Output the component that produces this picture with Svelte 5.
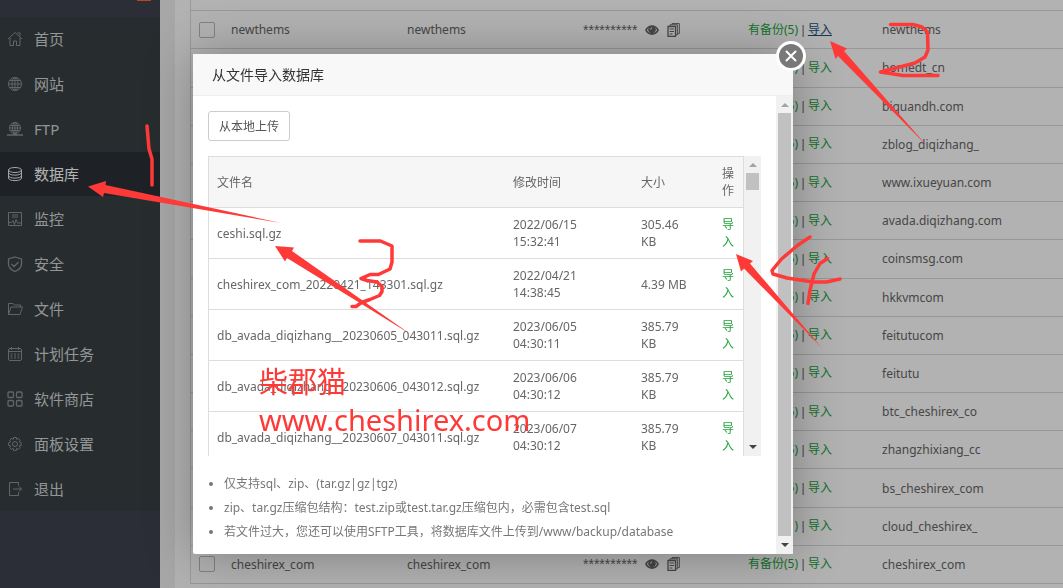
<script>
  const menu = [
    { label: '首页', icon: 'home' },
    { label: '网站', icon: 'globe' },
    { label: 'FTP', icon: 'ftp' },
    { label: '数据库', icon: 'db', active: true },
    { label: '监控', icon: 'monitor' },
    { label: '安全', icon: 'shield' },
    { label: '文件', icon: 'folder' },
    { label: '计划任务', icon: 'calendar' },
    { label: '软件商店', icon: 'apps' },
    { label: '面板设置', icon: 'gear' },
    { label: '退出', icon: 'exit' }
  ];

  const databases = [
    { name: '', note: '' },
    { name: 'newthems', note: 'newthems', hover: true },
    { name: 'homedt_cn', note: 'homedt_cn' },
    { name: 'biquandh_com', note: 'biquandh.com' },
    { name: 'zblog_diqizhang_', note: 'zblog_diqizhang_' },
    { name: 'ixueyuan', note: 'www.ixueyuan.com' },
    { name: 'avada', note: 'avada.diqizhang.com' },
    { name: 'coinsmsg', note: 'coinsmsg.com' },
    { name: 'hkkvmcom', note: 'hkkvmcom' },
    { name: 'feitutucom', note: 'feitutucom' },
    { name: 'feitutu', note: 'feitutu' },
    { name: 'btc_cheshirex_co', note: 'btc_cheshirex_co' },
    { name: 'zhangzhixiang_cc', note: 'zhangzhixiang_cc' },
    { name: 'bs_cheshirex_com', note: 'bs_cheshirex_com' },
    { name: 'cloud_cheshirex_', note: 'cloud_cheshirex_', backups: 1 },
    { name: 'cheshirex_com', note: 'cheshirex_com' }
  ];

  const files = [
    { name: 'ceshi.sql.gz', day: '2022/06/15', time: '15:32:41', size: '305.46 KB' },
    { name: 'cheshirex_com_20220421_143301.sql.gz', day: '2022/04/21', time: '14:38:45', size: '4.39 MB' },
    { name: 'db_avada_diqizhang__20230605_043011.sql.gz', day: '2023/06/05', time: '04:30:11', size: '385.79 KB' },
    { name: 'db_avada_diqizhang__20230606_043012.sql.gz', day: '2023/06/06', time: '04:30:12', size: '385.79 KB' },
    { name: 'db_avada_diqizhang__20230607_043011.sql.gz', day: '2023/06/07', time: '04:30:12', size: '385.79 KB' }
  ];
</script>

{#snippet icon(name)}
  <svg class="icon" viewBox="0 0 16 16" width="16" height="16" fill="none" stroke="currentColor" aria-hidden="true">
    {#if name === 'home'}
      <path d="M1 8 8 1.500 15 8M3 7v7.500h3.500V10h3v4.500H13V7M10.500 2H13v3" />
    {:else if name === 'globe'}
      <circle cx="8" cy="8" r="6.500" /><ellipse cx="8" cy="8" rx="3" ry="6.500" /><path d="M8 1.500v13M1.500 8h13M2.500 4.500h11M2.500 11.500h11" />
    {:else if name === 'ftp'}
      <circle cx="8" cy="7" r="5.500" /><ellipse cx="8" cy="7" rx="2.500" ry="5.500" /><path d="M8 1.500v11M2.500 7h11M3.500 4.500h9M3.500 9.500h9" /><path stroke-width="1.500" d="M0 14h16M6 13.500h4" />
    {:else if name === 'db'}
      <ellipse cx="8" cy="4" rx="6.500" ry="2.500" /><path d="M1.500 4v8c0 3.500 13 3.500 13 0V4M1.500 6.500c0 3.500 13 3.500 13 0M1.500 9.500c0 3.500 13 3.500 13 0" />
    {:else if name === 'monitor'}
      <path d="M1.500 1.500h13v13h-13zM5 4h6M5 6h6M1.500 11.500h3l1.500-2 1.500 4 1.500-5 1.500 3.500h4" />
    {:else if name === 'shield'}
      <path stroke-width="1.300" d="M8 1 14.500 3v5c0 3.500-3 6-6.500 7.500C4.500 14 1.500 11.500 1.500 8V3zM4.500 8l2.500 2.500L11.500 6" />
    {:else if name === 'folder'}
      <path d="M1.500 13.500v-11h4.500l1.500 1.500h6v2M1.500 13.500 4 6h11.500l-2.500 7.500z" />
    {:else if name === 'calendar'}
      <rect x="1.500" y="2.500" width="13" height="12" rx="1.500" /><path d="M1.500 5.500h13M4.500 1v3M11.500 1v3" /><path stroke-dasharray="2 1.500" d="M3.500 8h9.500M3.500 10h9.500M3.500 12h9.500" />
    {:else if name === 'apps'}
      <g stroke-width="1.300"><rect x="1" y="1" width="5.500" height="5.500" rx="1" /><rect x="9.500" y="1" width="5.500" height="5.500" rx="1" /><rect x="1" y="9.500" width="5.500" height="5.500" rx="1" /><rect x="9.500" y="9.500" width="5.500" height="5.500" rx="1" /></g>
    {:else if name === 'gear'}
      <circle cx="8" cy="8" r="2.500" /><path d="M6.700 1.500h2.600l.4 1.800 1.600-.9 1.900 1.900-1 1.500 2 .9v2.600l-2 .5 1 1.700-1.900 1.900-1.600-1-.4 2h-2.600l-.5-2-1.600 1-1.900-1.900 1-1.700-2-.5V6.700l2-.9-1-1.500 1.900-1.900 1.600.9z" />
    {:else}
      <path d="M11.500 4.500v-3h-9v13h9v-3M6 8h8.500M12 5.500 14.500 8 12 10.500" />
    {/if}
  </svg>
{/snippet}

<div class="page">
  <aside>
    <div class="brand"><span class="badge"></span></div>
    <nav>
      {#each menu as m}
        <a href="#{m.icon}" class:active={m.active}>{@render icon(m.icon)}<span>{m.label}</span></a>
      {/each}
    </nav>
  </aside>
  <main>
    <div class="pane">
      <table class="dbs">
        <colgroup><col class="c-check" /><col class="c-name" /><col class="c-name" /><col class="c-pass" /><col class="c-back" /><col /></colgroup>
        <tbody>
          {#each databases as d}
            <tr>
              <td><input type="checkbox" aria-label="选择 {d.name}" /></td>
              <td>{d.name}</td>
              <td>{d.name}</td>
              <td>
                {#if d.name}
                  <div class="pass">
                    <span class="stars">**********</span>
                    <svg viewBox="0 0 14 12" width="14" height="12" aria-hidden="true">
                      <path fill="currentColor" fill-rule="evenodd" d="M0 6C3-.5 11-.5 14 6 11 12.500 3 12.500 0 6zM2 6c2 4.500 8 4.500 10 0-.6-1.300-1.300-2.200-2.300-2.800a3.700 3.700 0 1 1-5.400 0C3.300 3.800 2.600 4.700 2 6z" /><path d="M5.500 5.500A1.600 1.600 0 0 1 7 4" fill="none" stroke="#fff" />
                    </svg>
                    <svg viewBox="0 0 13 14" width="13" height="14" fill="none" stroke="currentColor" aria-hidden="true">
                      <path d="M1 3.500h7.500v10H1z" stroke-width="1.300" /><path d="M3 3V1.800h7.300V12H9M5 1.500V.6h7.300v10H11M2.500 6H7M2.500 8.500H7M2.500 11H5.500" />
                    </svg>
                  </div>
                {/if}
              </td>
              <td>{#if d.name}<a href="#backup">有备份({d.backups ?? 5})</a><span class="sep">{' | '}</span><a href="#import" class:hover={d.hover}>导入</a>{/if}</td>
              <td>{d.note}</td>
            </tr>
          {/each}
        </tbody>
      </table>
    </div>
  </main>
</div>
<div class="shade"></div>

<div class="modal" role="dialog" aria-labelledby="title">
  <h1 id="title">从文件导入数据库</h1>
  <button class="close" aria-label="关闭">
    <svg viewBox="0 0 12 12" width="12" height="12" fill="none" stroke="#fff" stroke-width="2" stroke-linecap="round" aria-hidden="true"><path d="M1.500 1.500l9 9M10.500 1.500l-9 9" /></svg>
  </button>
  <div class="body">
    <div class="content">
      <button class="upload">从本地上传</button>
      <div class="scroller">
        <div class="clip">
          <table class="files">
            <colgroup><col /><col class="f-time" /><col class="f-size" /><col class="f-op" /></colgroup>
            <thead><tr><th>文件名</th><th>修改时间</th><th>大小</th><th>操作</th></tr></thead>
            <tbody>
              {#each files as f}
                <tr><td>{f.name}</td><td>{f.day}<br />{f.time}</td><td class="size">{f.size}</td><td><a href="#import">导入</a></td></tr>
              {/each}
            </tbody>
          </table>
        </div>
        <div class="bar"><i class="up"></i><b class="short"></b><i class="down"></i></div>
      </div>
      <ul>
        <li>仅支持sql、zip、(tar.gz|gz|tgz)</li>
        <li>zip、tar.gz压缩包结构：test.zip或test.tar.gz压缩包内，必需包含test.sql</li>
        <li>若文件过大，您还可以使用SFTP工具，将数据库文件上传到/www/backup/database</li>
      </ul>
    </div>
    <div class="bar"><i class="up"></i><b></b><i class="down"></i></div>
  </div>
</div>

<svg class="marks" width="1063" height="588" viewBox="0 0 1063 588" aria-hidden="true">
  <g fill="#fd3a38">
    <path d="M88 186.500 106 181l-.5 4L281 223 104 193l-1 4z" />
    <path d="M830 41l17 7.500-3 2.500L927 146 838 56l-2.500 3z" />
    <path d="M275 246l19 1.500-2 3.500L411 334.500 287 258l-2 3.500z" />
    <path d="M736 254l17 7-3 2.500L822 348 744 268.500l-3 3z" />
  </g>
  <g fill="none" stroke="#fd3a38" stroke-width="3.500" stroke-linecap="round" stroke-linejoin="round">
    <path d="M147 126l2 23 3 10v26" />
    <path d="M890.500 24.500H913l9 2.500 5.500 5 .5 18-3 7-10 6-34.500 9 22.500 3.500h35" />
    <path d="M360 241h20.500l11.500 5v16l-2 7-11.500 5.500H370l-9 4 6 2 10 1.500 5 4.500v5l-2.500 4-9.500 4-8.500 3-5.500 4h-4" />
    <path d="M810 237l-12 8-16.500 14-9.500 11.500 1 3.500 14 4 26 4h13.500l13.500-3M827.500 258.500l-7.500 5-6 10.500-4 16-2 13.500" />
  </g>
  <text x="259" y="393">柴郡猫</text>
  <text x="259" y="431">www.cheshirex.com</text>
</svg>

<style>
  :global(body) {
    margin: 0;
    font: 12px/17px 'Noto Sans', 'Noto Sans CJK SC', sans-serif;
    color: #666;
  }
  .page { display: flex; height: 100vh; overflow: hidden; }
  a { color: #20a53a; text-decoration: none; }
  a.hover { color: #23527c; text-decoration: underline; }

  aside { flex: 0 0 160px; background: #3e4350; }
  .brand { height: 17px; padding-left: 137px; }
  .badge { display: block; width: 14px; height: 1px; background: #ff6a22; }
  nav { background: #383f43; }
  nav a {
    display: flex;
    align-items: center;
    gap: 11px;
    height: 44px;
    margin-bottom: 1px;
    padding-left: 7px;
    color: #d4d6d8;
    font-size: 15px;
    line-height: 20px;
  }
  nav .icon { color: #8c9296; }
  nav a.active { background: #2c3138; color: #fff; }
  nav a.active .icon { color: #eee; }

  main { flex: 1; min-width: 0; padding-left: 15px; background: #f0f0f0; }
  .pane { height: 100%; padding-left: 15px; background: #fff; overflow: hidden; }
  .dbs {
    width: 100%;
    height: calc(100% + 23px);
    margin-top: -27px;
    table-layout: fixed;
    border-spacing: 0;
    border-left: 1px solid #ddd;
  }
  .dbs tr { height: 38px; }
  .dbs td { padding: 0 8px; border-bottom: 1px solid #d8d8d8; white-space: nowrap; }
  .c-check { width: 32px; }
  .c-name { width: 176px; }
  .c-pass { width: 165px; }
  .c-back { width: 134px; }
  .dbs input {
    display: block;
    appearance: none;
    box-sizing: border-box;
    width: 16px;
    height: 16px;
    margin: 0;
    border: 1px solid #bbb;
    border-radius: 2px;
  }
  .pass { display: flex; align-items: center; gap: 8px; }
  .stars { font: 14px/14px 'Liberation Sans', sans-serif; }
  .sep { font-family: 'Liberation Sans', sans-serif; white-space: pre; }

  .shade { position: fixed; inset: 0; background: rgba(0, 0, 0, .3); }

  .modal {
    position: absolute;
    top: 54px;
    left: 193px;
    width: 600px;
    background: #fff;
    border-radius: 2px;
    box-shadow: 1px 1px 50px rgba(0, 0, 0, .3);
  }
  h1 {
    margin: 0;
    padding: 0 19px;
    border-bottom: 1px solid #eee;
    background: #f8f8f8;
    color: #333;
    font-size: 14px;
    font-weight: 400;
    line-height: 41px;
  }
  .close {
    position: absolute;
    top: -13px;
    right: -13px;
    display: flex;
    align-items: center;
    justify-content: center;
    width: 30px;
    height: 30px;
    padding: 0;
    border: 3px solid #fff;
    border-radius: 50%;
    background: #787878;
  }
  .body { display: flex; }
  .content { flex: 1; min-width: 0; padding: 15px 15px 10px; }
  .upload {
    display: block;
    height: 30px;
    margin-bottom: 15px;
    padding: 0 10px;
    border: 1px solid #ccc;
    border-radius: 3px;
    background: #fff;
    color: #555;
    font: inherit;
  }
  .scroller { display: flex; height: 300px; }
  .clip { flex: 1; overflow: hidden; border: solid #ddd; border-width: 1px 1px 0; }
  .files { width: 100%; table-layout: fixed; border-spacing: 0; }
  .files th, .files td { padding: 8px; border-bottom: 1px solid #ddd; text-align: left; font-weight: 400; }
  .files th { background: #f6f6f6; }
  .files .size { padding-right: 20px; }
  .f-time { width: 128px; }
  .f-size { width: 81px; }
  .f-op { width: 29px; }

  .bar { display: flex; flex: 0 0 17px; flex-direction: column; align-items: center; background: #f1f1f1; }
  .bar b { flex: 1; width: 13px; background: #c1c1c1; }
  .bar b.short { flex: 0 0 17px; margin-bottom: auto; }
  .bar i { margin: 7px 0; border: solid transparent; border-width: 0 4px; }
  .bar .up { border-bottom: 4px solid #a3a3a3; margin-bottom: 6px; }
  .bar .down { border-top: 4px solid #444; }

  ul { margin: 16px 0 0; padding-left: 16px; color: #777; line-height: 24px; }

  .marks { position: absolute; top: 0; left: 0; pointer-events: none; }
  .marks text { fill: #fd3a38; font: 29px 'Noto Sans', 'Noto Sans CJK SC', sans-serif; }
</style>
